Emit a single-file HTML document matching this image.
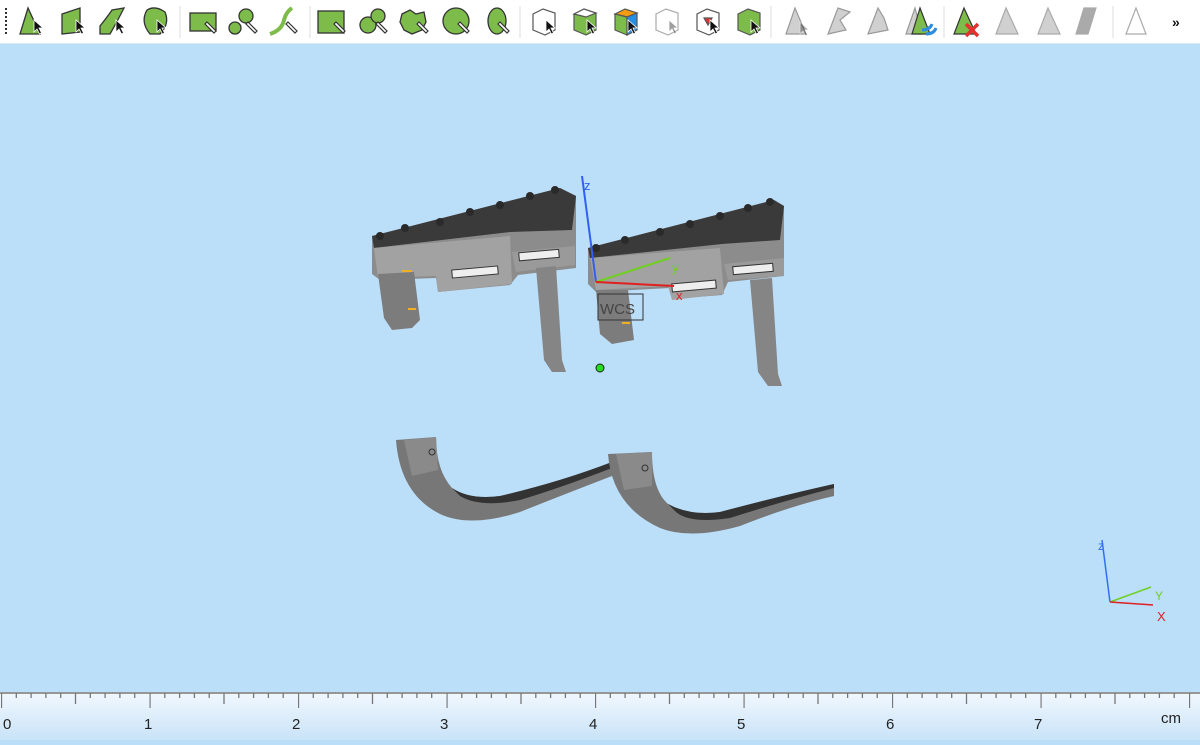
<!DOCTYPE html>
<html><head><meta charset="utf-8"><style>
html,body{margin:0;padding:0;width:1200px;height:740px;overflow:hidden;background:#bbdef9;font-family:"Liberation Sans",sans-serif}
#tb{position:absolute;left:0;top:0;width:1200px;height:43px;background:#fff;border-bottom:1px solid #dbe9f5}
#vp{position:absolute;left:0;top:44px;width:1200px;height:648px;background:#bbdef9}
#ru{position:absolute;left:0;top:692px;width:1200px;height:48px;background:linear-gradient(#f2f8fe,#c9e3f8)}
.lb{position:absolute;top:716px;font-size:15px;color:#222}
</style></head><body>
<div id="tb">
<svg width="1200" height="43" xmlns="http://www.w3.org/2000/svg">
<defs>
<g id="cur"><path d="M0 0 L0 12 L3 9 L5.5 14 L7.5 13 L5 8 L9 8 Z" fill="#111" stroke="#fff" stroke-width="0.8"/></g>
<g id="pen"><path d="M0 0 L9 9 L7 11 L-2 2Z" fill="#fff" stroke="#333" stroke-width="1.2"/></g>
</defs>
<g fill="#333"><rect x="5" y="8" width="2" height="2"/><rect x="5" y="12" width="2" height="2"/><rect x="5" y="16" width="2" height="2"/><rect x="5" y="20" width="2" height="2"/><rect x="5" y="24" width="2" height="2"/><rect x="5" y="28" width="2" height="2"/><rect x="5" y="32" width="2" height="2"/></g>
<g stroke="#333" stroke-width="1.3" fill="#7dbb4a">
<path d="M28 8 L20 34 L40 34 Z"/>
<path d="M62 14 L80 8 L80 32 L62 34 Z"/>
<path d="M100 34 L100 26 Q108 16 112 10 L124 8 Q118 20 110 34Z"/>
<path d="M147 10 Q155 5 165 12 Q170 24 160 34 L150 34 Q140 22 147 10Z"/>
<rect x="190" y="13" width="26" height="18"/>
<circle cx="235" cy="28" r="6"/><circle cx="246" cy="16" r="7"/>
<path d="M270 34 Q282 30 284 20 Q286 12 292 8" fill="none" stroke="#7dbb4a" stroke-width="4"/>
<rect x="318" y="11" width="26" height="22"/>
<circle cx="368" cy="25" r="8"/><circle cx="378" cy="16" r="7"/>
<path d="M402 14 L410 10 L416 14 L424 12 L426 22 L422 30 L412 34 L404 30 L400 22Z"/>
<circle cx="456" cy="21" r="13"/>
<ellipse cx="497" cy="21" rx="9" ry="13"/>
</g>
<g fill="#7dbb4a" stroke="#555" stroke-width="1.2">
<path d="M533 14 L543 9 L555 13 L555 30 L545 35 L533 30Z" fill="#fff"/>
<path d="M574 14 L584 9 L596 13 L596 30 L586 35 L574 30Z" fill="#7dbb4a"/>
<path d="M574 14 L584 9 L596 13 L586 17Z" fill="#fff"/>
<path d="M615 14 L625 9 L637 13 L627 17Z" fill="#f39c12"/>
<path d="M615 14 L627 17 L627 35 L615 30Z" fill="#7dbb4a"/>
<path d="M627 17 L637 13 L637 30 L627 35Z" fill="#2a8ee0"/>
<path d="M656 14 L666 9 L678 13 L678 30 L668 35 L656 30Z" fill="#fff" stroke="#aaa"/>
<path d="M697 14 L707 9 L719 13 L719 30 L709 35 L697 30Z" fill="#fff"/>
<path d="M704 18 L712 18 L708 25Z" fill="#e53030"/>
<path d="M738 14 L748 9 L760 13 L760 30 L750 35 L738 30Z" fill="#7dbb4a"/>
</g>
<g fill="#d0d0d0" stroke="#999" stroke-width="1.2">
<path d="M795 8 L786 34 L806 34Z"/>
<path d="M838 8 L828 34 L846 30 L840 20 L850 12Z"/>
<path d="M878 8 L868 34 L888 30 L884 18Z"/>
<path d="M915 8 L906 34 L922 34Z"/>
</g>
<path d="M920 8 L912 34 L930 34Z" fill="#7dbb4a" stroke="#333" stroke-width="1.2"/>
<path d="M922 30 Q930 30 932 24 M926 34 Q934 34 936 28" stroke="#2a8ee0" stroke-width="3" fill="none"/>
<path d="M964 8 L954 34 L976 34Z" fill="#7dbb4a" stroke="#333" stroke-width="1.2"/>
<path d="M966 24 L978 36 M978 24 L966 36" stroke="#e53030" stroke-width="3.5"/>
<g fill="#d0d0d0" stroke="#aaa" stroke-width="1.2">
<path d="M1006 8 L996 34 L1018 34Z"/>
<path d="M1048 8 L1038 34 L1060 34Z"/>
<path d="M1076 34 L1084 8 L1096 8 L1088 34Z" fill="#aaa"/>
<path d="M1136 8 L1126 34 L1146 34Z" fill="#fff"/>
</g>
<g>
<use href="#cur" x="34" y="20"/><use href="#cur" x="76" y="20"/><use href="#cur" x="116" y="20"/><use href="#cur" x="157" y="20"/>
<use href="#pen" x="207" y="22"/><use href="#pen" x="248" y="22"/><use href="#pen" x="288" y="22"/>
<use href="#pen" x="336" y="22"/><use href="#pen" x="378" y="22"/><use href="#pen" x="419" y="22"/><use href="#pen" x="460" y="22"/><use href="#pen" x="500" y="22"/>
<use href="#cur" x="546" y="20"/><use href="#cur" x="587" y="20"/><use href="#cur" x="628" y="20"/><use href="#cur" x="669" y="20" opacity="0.4"/><use href="#cur" x="710" y="20"/><use href="#cur" x="751" y="20"/>
<use href="#cur" x="800" y="22" opacity="0.35"/>
</g>
<g stroke="#ddd" stroke-width="1"><line x1="180" y1="6" x2="180" y2="38"/><line x1="310" y1="6" x2="310" y2="38"/><line x1="520" y1="6" x2="520" y2="38"/><line x1="771" y1="6" x2="771" y2="38"/><line x1="944" y1="6" x2="944" y2="38"/><line x1="1113" y1="6" x2="1113" y2="38"/></g>
<text x="1172" y="27" font-size="14" font-weight="bold" fill="#111" font-family="Liberation Sans">»</text>
</svg>
</div>
<div id="vp">
<svg width="1200" height="648" xmlns="http://www.w3.org/2000/svg">
<g transform="translate(0,-44)">
<path d="M372 236 L560 188 L576 196 L576 268 L518 275 L510 285 L438 292 L436 278 L380 280 L372 274Z" fill="#8c8c8c"/>
<path d="M372 236 L560 188 L576 196 L572 230 L510 232 L374 248Z" fill="#3a3a3a"/>
<g fill="#2a2a2a"><circle cx="380" cy="236" r="4"/><circle cx="405" cy="228" r="4"/><circle cx="440" cy="222" r="4"/><circle cx="470" cy="212" r="4"/><circle cx="500" cy="205" r="4"/><circle cx="530" cy="196" r="4"/><circle cx="555" cy="190" r="4"/></g>
<path d="M374 248 L510 236 L512 284 L438 292 L436 276 L378 278Z" fill="#a2a2a2"/>
<path d="M512 252 L575 246 L575 265 L516 272Z" fill="#9a9a9a"/>
<rect x="452" y="268" width="46" height="8" fill="#eee" stroke="#333" transform="rotate(-5 475 272)"/>
<rect x="519" y="251" width="40" height="8" fill="#eee" stroke="#333" transform="rotate(-5 540 255)"/>
<path d="M378 274 L414 272 L420 320 L412 328 L392 330 L384 318Z" fill="#7c7c7c"/>
<path d="M536 268 L556 266 L562 360 L566 372 L552 372 L544 360Z" fill="#858585"/>
<path d="M402 271 L412 271" stroke="#f0b020" stroke-width="2"/><path d="M408 309 L416 309" stroke="#f0b020" stroke-width="2"/>
<path d="M588 248 L774 200 L784 206 L784 276 L728 282 L722 295 L672 299 L670 288 L596 292 L588 284Z" fill="#8c8c8c"/>
<path d="M588 248 L774 200 L784 206 L780 240 L722 244 L590 258Z" fill="#3a3a3a"/>
<g fill="#2a2a2a"><circle cx="596" cy="248" r="4"/><circle cx="625" cy="240" r="4"/><circle cx="660" cy="232" r="4"/><circle cx="690" cy="224" r="4"/><circle cx="720" cy="216" r="4"/><circle cx="748" cy="208" r="4"/><circle cx="770" cy="202" r="4"/></g>
<path d="M590 258 L720 248 L724 294 L672 300 L668 286 L596 290Z" fill="#a2a2a2"/>
<path d="M724 264 L784 258 L784 276 L728 280Z" fill="#9a9a9a"/>
<rect x="672" y="282" width="44" height="8" fill="#eee" stroke="#333" transform="rotate(-5 694 286)"/>
<rect x="733" y="265" width="40" height="8" fill="#eee" stroke="#333" transform="rotate(-5 753 269)"/>
<path d="M596 290 L628 290 L634 340 L612 344 L600 334Z" fill="#7c7c7c"/>
<path d="M750 280 L772 278 L778 374 L782 386 L768 386 L758 372Z" fill="#858585"/>
<path d="M622 323 L630 323" stroke="#f0b020" stroke-width="2"/>
<path d="M582 176 L596 282" stroke="#3060f0" stroke-width="2"/>
<text x="584" y="190" font-size="13" fill="#3060f0">z</text>
<path d="M596 282 L670 258" stroke="#70d020" stroke-width="2"/>
<text x="672" y="272" font-size="13" fill="#70d020">y</text>
<path d="M596 282 L674 286" stroke="#e02020" stroke-width="2"/>
<text x="676" y="300" font-size="13" fill="#e02020">x</text>
<rect x="598" y="294" width="45" height="26" fill="none" stroke="#333"/>
<text x="600" y="314" font-size="15" fill="#444">WCS</text>
<circle cx="600" cy="368" r="4" fill="#20e020" stroke="#222"/>
<!-- lower parts -->
<path d="M396 440 L436 437 Q436 470 452 488 Q470 500 500 496 Q560 482 612 462 L612 476 Q560 496 520 512 Q470 528 440 514 Q400 494 396 440Z" fill="#777"/>
<path d="M452 488 Q470 500 500 496 Q560 482 612 462 L612 468 Q560 488 520 500 Q480 508 460 496Z" fill="#333"/>
<path d="M404 440 L436 437 L438 470 L412 476Z" fill="#8a8a8a"/>
<path d="M608 454 L652 452 Q652 490 668 504 Q690 516 720 512 Q780 496 834 484 L834 496 Q790 506 740 526 Q690 540 660 528 Q612 506 608 454Z" fill="#777"/>
<path d="M668 504 Q690 516 720 512 Q780 496 834 484 L834 488 Q780 502 730 518 Q690 524 676 512Z" fill="#333"/>
<path d="M616 454 L652 452 L652 486 L624 490Z" fill="#8a8a8a"/>
<circle cx="432" cy="452" r="3" fill="none" stroke="#333"/><circle cx="645" cy="468" r="3" fill="none" stroke="#333"/>
<path d="M1102 540 L1110 602" stroke="#3070f0" stroke-width="1.5"/>
<text x="1098" y="550" font-size="12" fill="#3070f0">z</text>
<path d="M1110 602 L1151 587" stroke="#70d020" stroke-width="1.5"/>
<text x="1155" y="600" font-size="12" fill="#70d020">Y</text>
<path d="M1110 602 L1153 605" stroke="#e02020" stroke-width="1.5"/>
<text x="1157" y="621" font-size="13" fill="#e02020">X</text>
</g>
</svg>
</div>
<div id="ru">
<svg width="1200" height="48" xmlns="http://www.w3.org/2000/svg">
<defs><pattern id="tk" x="1" y="0" width="148.5" height="20" patternUnits="userSpaceOnUse">
<g stroke="#777" stroke-width="1.3">
<line x1="0.5" y1="0" x2="0.5" y2="16"/>
<line x1="15.3" y1="0" x2="15.3" y2="6"/><line x1="30.1" y1="0" x2="30.1" y2="6"/><line x1="44.9" y1="0" x2="44.9" y2="6"/><line x1="59.7" y1="0" x2="59.7" y2="6"/>
<line x1="74.5" y1="0" x2="74.5" y2="12"/>
<line x1="89.3" y1="0" x2="89.3" y2="6"/><line x1="104.1" y1="0" x2="104.1" y2="6"/><line x1="118.9" y1="0" x2="118.9" y2="6"/><line x1="133.7" y1="0" x2="133.7" y2="6"/>
</g></pattern></defs>
<line x1="0" y1="1" x2="1200" y2="1" stroke="#777" stroke-width="1.5"/>
<rect x="0" y="1" width="1200" height="18" fill="url(#tk)"/>
</svg>
</div>
<div class="lb" style="left:3px">0</div><div class="lb" style="left:144px">1</div><div class="lb" style="left:292px">2</div><div class="lb" style="left:440px">3</div><div class="lb" style="left:589px">4</div><div class="lb" style="left:737px">5</div><div class="lb" style="left:886px">6</div><div class="lb" style="left:1034px">7</div><div class="lb" style="left:1161px;top:710px">cm</div>
</body></html>
